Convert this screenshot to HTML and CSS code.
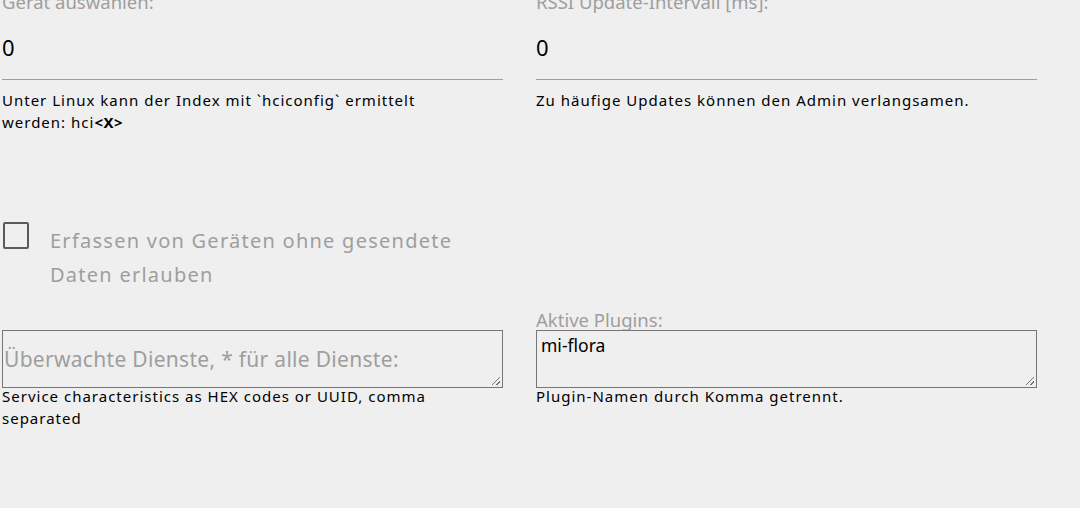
FILE: index.html
```html
<!DOCTYPE html>
<html lang="de">
<head>
<meta charset="utf-8">
<link rel="stylesheet" href="styles.css">
</head>
<body>
<div class="page">
  <div class="row">
    <div class="field">
      <label class="label">Gerät auswählen:</label>
      <div class="input">0</div>
      <div class="helper">Unter Linux kann der Index mit `hciconfig` ermittelt werden: hci<b>&lt;X&gt;</b></div>
    </div>
    <div class="field">
      <label class="label">RSSI Update-Intervall [ms]:</label>
      <div class="input">0</div>
      <div class="helper">Zu häufige Updates können den Admin verlangsamen.</div>
    </div>
  </div>

  <div class="check-row">
    <span class="checkbox"></span>
    <span class="check-label">Erfassen von Geräten ohne gesendete Daten erlauben</span>
  </div>

  <div class="row row-ta">
    <div class="field">
      <div class="ta"><span class="placeholder">Überwachte Dienste, * für alle Dienste:</span><span class="grip"></span></div>
      <div class="helper helper-ta">Service characteristics as HEX codes or UUID, comma separated</div>
    </div>
    <div class="field">
      <label class="label label-ta">Aktive Plugins:</label>
      <div class="ta"><span class="value">mi-flora</span><span class="grip"></span></div>
      <div class="helper helper-ta">Plugin-Namen durch Komma getrennt.</div>
    </div>
  </div>
</div>
</body>
</html>
```

FILE: styles.css
```css
html, body {
  margin: 0;
  background: #efefef;
  font-family: "Noto Sans", "DejaVu Sans", sans-serif;
  color: #000;
}
.page {
  margin-top: -8px;
  padding-left: 2px;
}
.row {
  display: grid;
  grid-template-columns: 501px 501px;
  column-gap: 33px;
  align-items: start;
}
.label {
  display: block;
  font-size: 18.5px;
  line-height: 20px;
  color: #9e9e9e;
}
.input {
  font-size: 22px;
  line-height: 28px;
  padding: 21px 0 18px;
  border-bottom: 1px solid #9e9e9e;
}
.helper {
  font-size: 15px;
  line-height: 22px;
  margin-top: 9px;
  letter-spacing: 1px;
  max-width: 480px;
}
.helper b { font-weight: bold; letter-spacing: 0.5px; }
.check-row {
  display: flex;
  align-items: flex-start;
  margin-top: 87px;
  width: 501px;
}
.checkbox {
  flex: none;
  width: 22px;
  height: 23px;
  border: 2px solid #5a5a5a;
  border-radius: 2px;
  margin: 2px 0 0 1px;
}
.check-label {
  margin-left: 21px;
  font-size: 20px;
  line-height: 34px;
  color: #9e9e9e;
  width: 440px;
  padding-top: 4px;
  letter-spacing: 1.25px;
}
.row-ta { margin-top: 18px; }
.row-ta .field:first-child { padding-top: 20px; }
.label-ta { margin-bottom: 0; }
.ta {
  position: relative;
  box-sizing: border-box;
  height: 58px;
  border: 1px solid #767676;
  padding: 2px 4px;
}
.placeholder {
  display: block;
  font-size: 21px;
  line-height: 26px;
  color: #9e9e9e;
  padding-top: 13px;
  margin-left: -3px;
  letter-spacing: 0.3px;
}
.value {
  font-size: 17.5px;
  line-height: 24px;
}
.grip {
  position: absolute;
  right: 2px;
  bottom: 2px;
  width: 8px;
  height: 8px;
  background: linear-gradient(135deg, transparent 45%, #777 45%, #777 55%, transparent 55%, transparent 72%, #777 72%, #777 82%, transparent 82%);
}
.helper-ta { margin-top: -3px; }
```
